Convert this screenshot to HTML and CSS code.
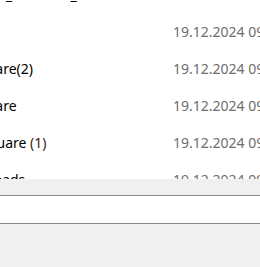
FILE: index.html
```html
<!DOCTYPE html>
<html>
<head>
    <meta charset="utf-8">
    <title>Files</title>
<link rel="stylesheet" href="styles.css">
</head>
<body>

  <div class="file-list">
    <div class="file-rows">
      <div class="file-row"><span class="file-name">Installer_Software_v4</span><span class="file-date">19.12.2024 10:02</span></div>
      <div class="file-row"><span class="file-name">Temp</span><span class="file-date">19.12.2024 09:58</span></div>
      <div class="file-row"><span class="file-name">Hardware(2)</span><span class="file-date">19.12.2024 09:57</span></div>
      <div class="file-row"><span class="file-name">Hardware</span><span class="file-date">19.12.2024 09:55</span></div>
      <div class="file-row"><span class="file-name">Websquare <span class="dup">(1)</span></span><span class="file-date">19.12.2024 09:54</span></div>
      <div class="file-row"><span class="file-name">Downloads</span><span class="file-date">19.12.2024 09:51</span></div>
    </div>
  </div>

  <div class="footer">
    <div class="footer-field"></div>
  </div>

</body>
</html>
```

FILE: styles.css
```css
body {
  margin: 0;
  width: 260px;
  height: 267px;
  overflow: hidden;
  background: #fff;
  font-family: "Segoe UI", "Noto Sans", sans-serif;
  font-size: 14px;
}

/* список файлов */
.file-list {
  height: 179px;
  overflow: hidden;
}

.file-rows {
  margin-top: -24px;
  margin-left: -48px;
}

.file-row {
  display: flex;
  height: 37px;
  line-height: 37px;
  white-space: nowrap;
}

.file-name {
  width: 221px;
  flex: none;
  overflow: hidden;
  color: #000;
}

.dup {
  color: #3c1a08;
}

.file-date {
  flex: none;
  color: #6d6d6d;
}

/* нижняя панель */
.footer {
  height: 88px;
  background: #f0f0f0;
  padding-top: 16px;
  box-sizing: border-box;
}

.footer-field {
  height: 27px;
  background: #fff;
  border-top: 1px solid #8a8a8a;
  border-bottom: 1px solid #8a8a8a;
}
```
